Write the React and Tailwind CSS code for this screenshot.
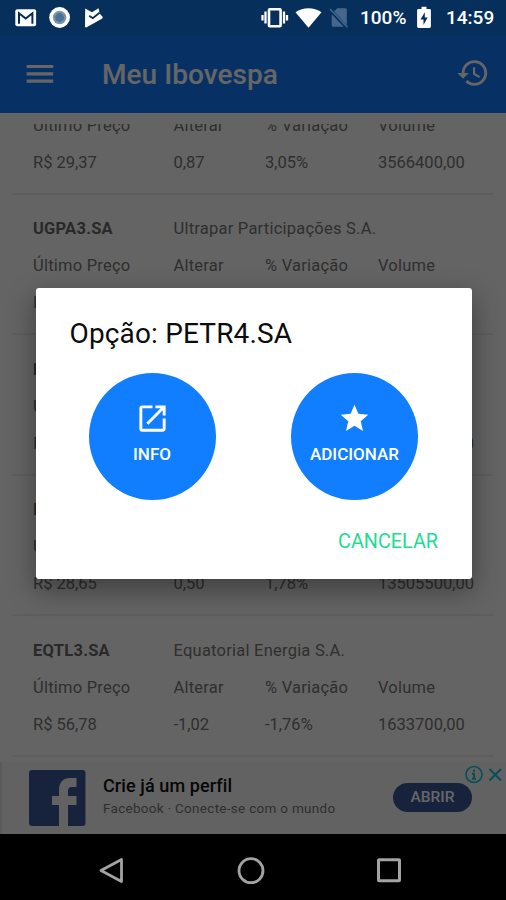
// src/App.jsx
import { MdHistory, MdOpenInNew, MdStar } from "react-icons/md";

const stocks = [
  { code: "BRKM5.SA", name: "Braskem S.A.", price: "R$ 29,37", change: "0,87", percent: "3,05%", volume: "3566400,00" },
  { code: "UGPA3.SA", name: "Ultrapar Participações S.A.", price: "R$ 29,37", change: "0,87", percent: "3,05%", volume: "3566400,00" },
  { code: "PETR4.SA", name: "Petrobras", price: "R$ 27,10", change: "0,42", percent: "1,57%", volume: "53505500,00" },
  { code: "ITSA4.SA", name: "Itaúsa S.A.", price: "R$ 28,65", change: "0,50", percent: "1,78%", volume: "13505500,00" },
  { code: "EQTL3.SA", name: "Equatorial Energia S.A.", price: "R$ 56,78", change: "-1,02", percent: "-1,76%", volume: "1633700,00" },
];

function StatusBar() {
  return (
    <div className="absolute inset-x-0 top-0 z-20 flex h-9 items-center justify-between pl-[15px] pr-[11px] text-white">
      <div className="flex items-center">
        {/* Gmail */}
        <svg className="h-[22px] w-[22px]" viewBox="0 0 22 22">
          <rect x="0.3" y="2.2" width="20.8" height="17" rx="2" fill="#fff" />
          <path d="M4 16.8V6.2l6.7 5.3 6.7-5.3v10.6" fill="none" stroke="#062c56" strokeWidth="2" />
        </svg>
        <svg className="ml-[12px] h-[22px] w-[22px]" viewBox="0 0 22 22">
          <circle cx="10.6" cy="10.5" r="10.4" fill="#fff" />
          <circle cx="10.6" cy="10.5" r="6.7" fill="#7893b0" />
          <circle cx="10.6" cy="10.5" r="4.4" fill="#4d7196" />
        </svg>
        {/* Play Store */}
        <svg className="ml-[12px] h-[22px] w-[22px]" viewBox="0 0 22 22">
          <path d="M2.2 1.6 9 5.2l6.6-4 1 5.2 3.2 3.5-.5 1.5L3.2 20.6 2 20z" fill="#fff" />
          <path d="m6.2 8.8 3.6 2.4 6.8-5.4" fill="none" stroke="#062c56" strokeWidth="1.8" />
        </svg>
      </div>
      <div className="flex items-center">
        {/* vibrate */}
        <svg className="h-[22px] w-[28px]" viewBox="0 0 28 22">
          <rect x="8" y="2.2" width="11.6" height="17" rx="0.8" fill="none" stroke="#fff" strokeWidth="2.6" />
          <path d="M4.5 4.5v12M1.5 8v5.5M23 4.5v12M26 8v5.5" stroke="#fff" strokeWidth="2.3" />
        </svg>
        {/* wifi */}
        <svg className="ml-[6px] h-[22px] w-[27px]" viewBox="0 0 27 22">
          <path d="M.5 5.3C8 -.2 19 -.2 26.5 5.3L13.5 20.8z" fill="#fff" />
        </svg>
        {/* no sim */}
        <svg className="ml-[7px] h-[22px] w-[20px]" viewBox="0 0 20 22">
          <path d="M8.2 1.2h8.2q1.4 0 1.4 1.4v15.6L5 4.6zM2.7 7.3v11q0 1.4 1.4 1.4h10.6z" fill="#46678b" />
          <path d="m1 2 17.4 18.3" stroke="#46678b" strokeWidth="1.5" />
        </svg>
        <span className="ml-[11px] w-[48px] whitespace-nowrap text-[19px] font-medium leading-6">100%</span>
        {/* battery */}
        <svg className="ml-[8px] h-[24px] w-[16px]" viewBox="0 0 16 24">
          <path d="M5.5 0.7h5v2.4h3q1.4 0 1.4 1.4v16q0 1.4-1.4 1.4h-11Q1.1 21.9 1.1 20.5V4.5q0-1.4 1.4-1.4h3z" fill="#fff" />
          <path d="M8.8 6.2 4.5 13.5H7.5v5.4L11.6 11.5H8.8z" fill="#062c56" />
        </svg>
        <span className="ml-[14px] w-[49px] whitespace-nowrap text-[19px] font-medium leading-6">14:59</span>
      </div>
    </div>
  );
}

function Toolbar() {
  return (
    <header className="shrink-0 bg-[#127cfa] text-white">
      <div className="h-9 bg-[#1076e6]" />
      <div className="flex h-[77px] items-center pl-[26px] pr-4">
        <svg className="-mt-[2px] h-[20px] w-[28px]" viewBox="0 0 28 20">
          <path d="M.7 2.5h26.5M.7 9.8h26.500M.7 17.2h26.5" stroke="#fff" strokeWidth="3.2" />
        </svg>
        <h1 className="ml-[48px] flex-1 text-[28px] font-medium leading-9 tracking-[0.05px]">Meu Ibovespa</h1>
        <MdHistory className="-mt-[3px] h-[34px] w-[34px]" />
      </div>
    </header>
  );
}

function StockRow({ stock }) {
  return (
    <div className="mx-3 h-[140.6px] shrink-0 border-b-2 border-[#ececec] pl-[21px] pt-[16.5px] text-[16.5px] text-[#757575]">
      <div className="flex h-[37px] items-center tracking-[0.23px]">
        <div className="w-[140.5px] font-bold text-[#666]">{stock.code}</div>
        <div>{stock.name}</div>
      </div>
      <div className="grid h-[37px] grid-cols-[140.5px_91.5px_113px_1fr] items-center tracking-[0.23px]">
        <div>Último Preço</div>
        <div>Alterar</div>
        <div>% Variação</div>
        <div>Volume</div>
      </div>
      <div className="grid h-[37px] grid-cols-[140.5px_91.5px_113px_1fr] items-center">
        <div>{stock.price}</div>
        <div>{stock.change}</div>
        <div>{stock.percent}</div>
        <div>{stock.volume}</div>
      </div>
    </div>
  );
}

function AdBanner() {
  return (
    <div className="relative flex h-[72px] shrink-0 items-center border-l-2 border-[#e0e0e0] bg-[#f6f6f6] pl-[26.5px] pr-[34px]">
      <svg className="h-[56px] w-[57px]" viewBox="0 0 57 56">
        <rect width="56.5" height="56" rx="3" fill="#3b5998" />
        <path d="M30 56V35h-7v-9h7v-5C30 12 34 8 41 8h6.5v9H43c-3 0-4 1.5-4 4v5h8.5V35H39v21z" fill="#f6f6f6" />
      </svg>
      <div className="-mt-[2px] ml-[17.5px] flex-1">
        <div className="whitespace-nowrap text-[18px] font-medium leading-[22px] tracking-[0.1px] text-[#101010]">Crie já um perfil</div>
        <div className="whitespace-nowrap text-[13.5px] leading-[22px] tracking-[0.29px] text-[#757575]">Facebook · Conecte-se com o mundo</div>
      </div>
      <button className="-mt-[1px] h-[29px] w-[79px] rounded-full bg-[#3b5998] text-[15.5px] font-medium text-white">ABRIR</button>
      <svg className="absolute right-[2px] top-[3px] h-5 w-[40px]" viewBox="0 0 40 20" fill="none" stroke="#12c4d6">
        <circle cx="10" cy="9.5" r="8" strokeWidth="1.6" />
        <path d="M10 4.5v2.3M8 8.7h2v5.3M8 13.8h4" strokeWidth="2" />
        <path d="m25.5 4 11.5 11.5m0-11.5-11.5 11.5" strokeWidth="2" />
      </svg>
    </div>
  );
}

function NavigationBar() {
  return (
    <div className="relative z-20 flex h-[66px] items-center justify-between bg-black pl-[97px] pr-[102px] pt-[8px]">
      <svg className="h-[30px] w-[30px]" viewBox="0 0 30 30">
        <path d="M24.5 3.5v22L4 14.5z" fill="none" stroke="#a3a3a3" strokeWidth="2.8" strokeLinejoin="round" />
      </svg>
      <svg className="h-[30px] w-[30px]" viewBox="0 0 30 30">
        <circle cx="15" cy="14.7" r="12" fill="none" stroke="#a3a3a3" strokeWidth="2.8" />
      </svg>
      <svg className="h-[30px] w-[30px]" viewBox="0 0 30 30">
        <rect x="4.5" y="3.8" width="21" height="21" rx="0.5" fill="none" stroke="#a3a3a3" strokeWidth="3" />
      </svg>
    </div>
  );
}

function OptionButton({ icon, label }) {
  return (
    <button className="flex h-[127px] w-[127px] flex-col items-center rounded-full bg-[#107eff] pt-[27px] text-white">
      <span className="flex h-[36px] items-center">{icon}</span>
      <span className="mt-[7px] text-[17px] font-medium leading-[22px]">{label}</span>
    </button>
  );
}

function OptionDialog({ code }) {
  return (
    <div className="absolute left-[35.5px] top-[287.5px] z-30 flex h-[291px] w-[436px] flex-col rounded-[3px] bg-white shadow-[0_10px_26px_2px_rgba(0,0,0,0.35)]">
      <h2 className="px-[34px] pt-[29px] text-[28px] leading-[34px] tracking-[0.15px] text-[#0c0c0c]">Opção: {code}</h2>
      <div className="mt-[22.5px] flex justify-between pl-[53px] pr-[53.5px]">
        <OptionButton icon={<MdOpenInNew className="h-[35px] w-[35px]" />} label="INFO" />
        <OptionButton icon={<MdStar className="h-[33px] w-[33px]" />} label="ADICIONAR" />
      </div>
      <button className="mr-[33.5px] mt-[29.5px] self-end text-[19.8px] leading-6 text-[#22dc90]">CANCELAR</button>
    </div>
  );
}

export default function App() {
  return (
    <div className="relative flex h-[900px] w-[506px] flex-col overflow-hidden bg-white font-[Roboto,sans-serif]">
      <Toolbar />
      {/* stock list, scrolled a bit down */}
      <div className="flex min-h-0 flex-1 flex-col bg-[#fafafa] pt-[11px]">
        <div className="flex min-h-0 flex-1 flex-col overflow-hidden">
          <div className="-mt-[70px] flex flex-col">
            {stocks.map((stock) => (
              <StockRow key={stock.code} stock={stock} />
            ))}
          </div>
        </div>
      </div>
      <AdBanner />
      <NavigationBar />

      <div className="absolute inset-0 z-10 bg-black/60" />
      <StatusBar />
      <OptionDialog code="PETR4.SA" />
    </div>
  );
}
